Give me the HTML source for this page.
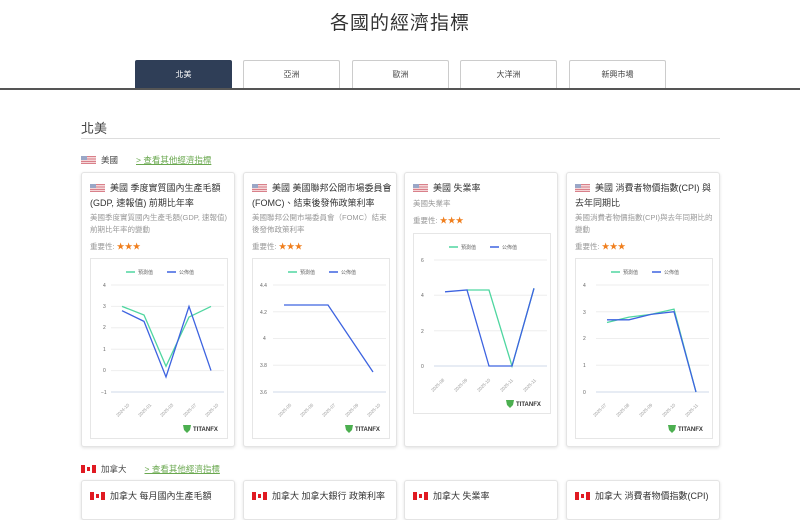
<!DOCTYPE html>
<html><head><meta charset="utf-8">
<style>
*{margin:0;padding:0;box-sizing:border-box}
body{width:800px;height:500px;overflow:hidden;background:#fff;font-family:"Liberation Sans","Noto Sans CJK TC",sans-serif;color:#333;position:relative}
.a{position:absolute}
h1{position:absolute;top:8px;left:0;width:800px;text-align:center;font-size:19px;font-weight:normal;color:#333;letter-spacing:1px}
.tab{position:absolute;top:60px;width:97px;height:28px;border:1px solid #ccc;border-bottom:none;font-size:8px;text-align:center;line-height:28px;color:#444;background:#fff;border-radius:2px 2px 0 0}
.tab.on{background:#2f3e57;color:#fff;border-color:#2f3e57}
.card{position:absolute;width:154px;background:#fff;border:1px solid #e4e4e4;border-radius:3px;box-shadow:0 1px 3px rgba(0,0,0,.12)}
.ti{position:absolute;left:8px;width:140px;font-size:9px;line-height:15px;color:#333}
.ds{position:absolute;left:8px;width:142px;font-size:7.5px;line-height:12px;color:#999}
.im{position:absolute;left:8px;font-size:7.5px;color:#999}
.im b{color:#f07f1e;font-weight:normal;font-size:8px}
.us{display:inline-block;width:15px;height:8px;vertical-align:-1px;margin-right:5px;background:repeating-linear-gradient(#d9808a 0 1.2px,#f4d6d8 1.2px 2.4px);position:relative}
.us:before{content:"";position:absolute;left:0;top:0;width:6px;height:4px;background:#9aa7c7}
.ca{display:inline-block;width:15px;height:8px;vertical-align:-1px;margin-right:5px;background:linear-gradient(90deg,#e01a22 0 4px,#fff 4px 11px,#e01a22 11px);position:relative}
.ca:before{content:"";position:absolute;left:6px;top:2px;width:3px;height:4px;background:#e01a22}
.chart{position:absolute;left:8px;width:138px;height:181px;border:1px solid #e6e6e6}
.lnk{color:#6aa84f;text-decoration:underline;font-size:8.5px}
</style></head><body>
<h1>各國的經濟指標</h1>
<div class="tab on" style="left:135px">北美</div>
<div class="tab" style="left:243px">亞洲</div>
<div class="tab" style="left:352px">歐洲</div>
<div class="tab" style="left:460px">大洋洲</div>
<div class="tab" style="left:569px">新興市場</div>
<div class="a" style="left:0;top:88px;width:800px;height:2px;background:#555"></div>
<div class="a" style="left:81px;top:118px;font-size:13px;color:#444">北美</div>
<div class="a" style="left:81px;top:138px;width:639px;height:1px;background:#ddd"></div>

<div class="a" style="left:81px;top:154px;font-size:8.5px;color:#444"><span class="us"></span>美國<span class="lnk" style="margin-left:18px">&gt; 查看其他經濟指標</span></div>

<!-- card1 -->
<div class="card" style="left:81px;top:172px;height:275px">
<div class="ti" style="top:8px"><span class="us"></span>美國 季度實質國內生產毛額(GDP, 速報值) 前期比年率</div>
<div class="ds" style="top:39px">美國季度實質國內生產毛額(GDP, 速報值)前期比年率的變動</div>
<div class="im" style="top:68px">重要性: <b>★★★</b></div>
<div class="chart" style="top:85px">
<svg width="138" height="181" font-family="Liberation Sans" font-size="5" fill="#666">
<g stroke="#eee" stroke-width="1"><line x1="20" x2="133" y1="26" y2="26"/><line x1="20" x2="133" y1="47.4" y2="47.4"/><line x1="20" x2="133" y1="68.8" y2="68.8"/><line x1="20" x2="133" y1="90.2" y2="90.2"/><line x1="20" x2="133" y1="111.6" y2="111.6"/></g>
<line x1="20" x2="133" y1="133" y2="133" stroke="#cfd8ea"/>
<text x="12" y="28">4</text><text x="12" y="49">3</text><text x="12" y="70">2</text><text x="12" y="92">1</text><text x="12" y="113">0</text><text x="10" y="135">−1</text>
<line x1="35" x2="44" y1="13" y2="13" stroke="#4fd6a0" stroke-width="1.5"/><text x="47" y="15">預測值</text>
<line x1="76" x2="85" y1="13" y2="13" stroke="#3d63e0" stroke-width="1.5"/><text x="88" y="15">公佈值</text>
<polyline fill="none" stroke="#4fd6a0" stroke-width="1.3" points="31,47.4 53,56 75,107.3 98,58.1 120,47.4"/>
<polyline fill="none" stroke="#3d63e0" stroke-width="1.3" points="31,51.7 53,62.4 75,118 98,47.4 120,111.6"/>
<g font-size="4.5" fill="#999"><text transform="translate(27,158) rotate(-45)">2024-10</text><text transform="translate(49,158) rotate(-45)">2025-01</text><text transform="translate(71,158) rotate(-45)">2025-03</text><text transform="translate(94,158) rotate(-45)">2025-07</text><text transform="translate(116,158) rotate(-45)">2025-10</text></g>
<path d="M92 166h8l-1 5-3 3-3-3z" fill="#4caf50"/><text x="102" y="172" font-size="6" font-weight="bold" fill="#333">TITANFX</text>
</svg></div>
</div>

<!-- card2 -->
<div class="card" style="left:243px;top:172px;height:275px">
<div class="ti" style="top:8px"><span class="us"></span>美國 美國聯邦公開市場委員會(FOMC)、結束後發佈政策利率</div>
<div class="ds" style="top:39px">美國聯邦公開市場委員會（FOMC）結束後發佈政策利率</div>
<div class="im" style="top:68px">重要性: <b>★★★</b></div>
<div class="chart" style="top:85px">
<svg width="138" height="181" font-family="Liberation Sans" font-size="5" fill="#666">
<g stroke="#eee"><line x1="20" x2="133" y1="26" y2="26"/><line x1="20" x2="133" y1="52.75" y2="52.75"/><line x1="20" x2="133" y1="79.5" y2="79.5"/><line x1="20" x2="133" y1="106.25" y2="106.25"/></g>
<line x1="20" x2="133" y1="133" y2="133" stroke="#cfd8ea"/>
<text x="7" y="28">4.4</text><text x="7" y="55">4.2</text><text x="10" y="81">4</text><text x="7" y="108">3.8</text><text x="7" y="135">3.6</text>
<line x1="35" x2="44" y1="13" y2="13" stroke="#4fd6a0" stroke-width="1.5"/><text x="47" y="15">預測值</text>
<line x1="76" x2="85" y1="13" y2="13" stroke="#3d63e0" stroke-width="1.5"/><text x="88" y="15">公佈值</text>
<polyline fill="none" stroke="#3d63e0" stroke-width="1.3" points="31,46 75,46 120,113"/>
<g font-size="4.5" fill="#999"><text transform="translate(27,158) rotate(-45)">2025-05</text><text transform="translate(49,158) rotate(-45)">2025-06</text><text transform="translate(71,158) rotate(-45)">2025-07</text><text transform="translate(94,158) rotate(-45)">2025-09</text><text transform="translate(116,158) rotate(-45)">2025-10</text></g>
<path d="M92 166h8l-1 5-3 3-3-3z" fill="#4caf50"/><text x="102" y="172" font-size="6" font-weight="bold" fill="#333">TITANFX</text>
</svg></div>
</div>

<!-- card3 -->
<div class="card" style="left:404px;top:172px;height:275px">
<div class="ti" style="top:8px"><span class="us"></span>美國 失業率</div>
<div class="ds" style="top:25px">美國失業率</div>
<div class="im" style="top:42px">重要性: <b>★★★</b></div>
<div class="chart" style="top:60px">
<svg width="138" height="181" font-family="Liberation Sans" font-size="5" fill="#666">
<g stroke="#eee"><line x1="20" x2="133" y1="26" y2="26"/><line x1="20" x2="133" y1="61.3" y2="61.3"/><line x1="20" x2="133" y1="96.7" y2="96.7"/></g>
<line x1="20" x2="133" y1="132" y2="132" stroke="#cfd8ea"/>
<text x="7" y="28">6</text><text x="7" y="63">4</text><text x="7" y="99">2</text><text x="7" y="134">0</text>
<line x1="35" x2="44" y1="13" y2="13" stroke="#4fd6a0" stroke-width="1.5"/><text x="47" y="15">預測值</text>
<line x1="76" x2="85" y1="13" y2="13" stroke="#3d63e0" stroke-width="1.5"/><text x="88" y="15">公佈值</text>
<polyline fill="none" stroke="#4fd6a0" stroke-width="1.3" points="53,56 75,56 98,132 120,54.3"/>
<polyline fill="none" stroke="#3d63e0" stroke-width="1.3" points="31,57.8 53,56 75,132 98,132 120,54.3"/>
<g font-size="4.5" fill="#999"><text transform="translate(19,158) rotate(-45)">2025-08</text><text transform="translate(42,158) rotate(-45)">2025-09</text><text transform="translate(65,158) rotate(-45)">2025-10</text><text transform="translate(88,158) rotate(-45)">2025-11</text><text transform="translate(111,158) rotate(-45)">2025-11</text></g>
<path d="M92 166h8l-1 5-3 3-3-3z" fill="#4caf50"/><text x="102" y="172" font-size="6" font-weight="bold" fill="#333">TITANFX</text>
</svg></div>
</div>

<!-- card4 -->
<div class="card" style="left:566px;top:172px;height:275px">
<div class="ti" style="top:8px"><span class="us"></span>美國 消費者物價指數(CPI) 與去年同期比</div>
<div class="ds" style="top:39px">美國消費者物價指數(CPI)與去年同期比的變動</div>
<div class="im" style="top:68px">重要性: <b>★★★</b></div>
<div class="chart" style="top:85px">
<svg width="138" height="181" font-family="Liberation Sans" font-size="5" fill="#666">
<g stroke="#eee"><line x1="20" x2="133" y1="26" y2="26"/><line x1="20" x2="133" y1="52.75" y2="52.75"/><line x1="20" x2="133" y1="79.5" y2="79.5"/><line x1="20" x2="133" y1="106.25" y2="106.25"/></g>
<line x1="20" x2="133" y1="133" y2="133" stroke="#cfd8ea"/>
<text x="7" y="28">4</text><text x="7" y="55">3</text><text x="7" y="81">2</text><text x="7" y="108">1</text><text x="7" y="135">0</text>
<line x1="35" x2="44" y1="13" y2="13" stroke="#4fd6a0" stroke-width="1.5"/><text x="47" y="15">預測值</text>
<line x1="76" x2="85" y1="13" y2="13" stroke="#3d63e0" stroke-width="1.5"/><text x="88" y="15">公佈值</text>
<polyline fill="none" stroke="#4fd6a0" stroke-width="1.3" points="31,63.5 53,58.1 75,55.4 98,50.1 120,133"/>
<polyline fill="none" stroke="#3d63e0" stroke-width="1.3" points="31,60.8 53,60.8 75,55.4 98,52.75 120,133"/>
<g font-size="4.5" fill="#999"><text transform="translate(19,158) rotate(-45)">2025-07</text><text transform="translate(42,158) rotate(-45)">2025-08</text><text transform="translate(65,158) rotate(-45)">2025-09</text><text transform="translate(88,158) rotate(-45)">2025-10</text><text transform="translate(111,158) rotate(-45)">2025-11</text></g>
<path d="M92 166h8l-1 5-3 3-3-3z" fill="#4caf50"/><text x="102" y="172" font-size="6" font-weight="bold" fill="#333">TITANFX</text>
</svg></div>
</div>

<div class="a" style="left:81px;top:463px;font-size:8.5px;color:#444"><span class="ca"></span>加拿大<span class="lnk" style="margin-left:18px">&gt; 查看其他經濟指標</span></div>

<div class="card" style="left:81px;top:480px;height:40px"><div class="ti" style="top:8px"><span class="ca"></span>加拿大 每月國內生產毛額</div></div>
<div class="card" style="left:243px;top:480px;height:40px"><div class="ti" style="top:8px"><span class="ca"></span>加拿大 加拿大銀行 政策利率</div></div>
<div class="card" style="left:404px;top:480px;height:40px"><div class="ti" style="top:8px"><span class="ca"></span>加拿大 失業率</div></div>
<div class="card" style="left:566px;top:480px;height:40px"><div class="ti" style="top:8px"><span class="ca"></span>加拿大 消費者物價指數(CPI)</div></div>
</body></html>
